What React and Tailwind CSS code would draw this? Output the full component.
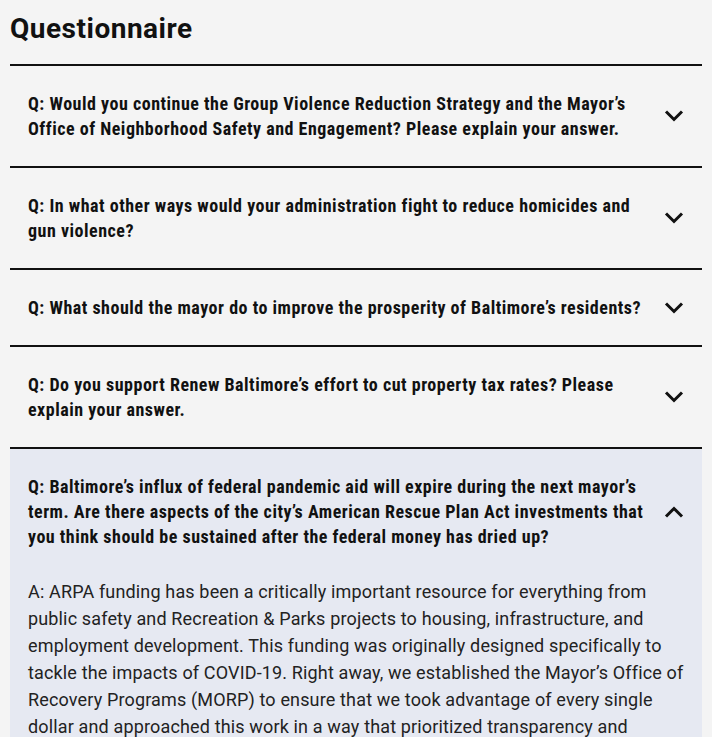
import React, { useState } from "react";

const questions = [
  {
    q: "Q: Would you continue the Group Violence Reduction Strategy and the Mayor’s Office of Neighborhood Safety and Engagement? Please explain your answer.",
  },
  {
    q: "Q: In what other ways would your administration fight to reduce homicides and gun violence?",
  },
  {
    q: "Q: What should the mayor do to improve the prosperity of Baltimore’s residents?",
  },
  {
    q: "Q: Do you support Renew Baltimore’s effort to cut property tax rates? Please explain your answer.",
  },
  {
    q: "Q: Baltimore’s influx of federal pandemic aid will expire during the next mayor’s term. Are there aspects of the city’s American Rescue Plan Act investments that you think should be sustained after the federal money has dried up?",
    a: "A: ARPA funding has been a critically important resource for everything from public safety and Recreation & Parks projects to housing, infrastructure, and employment development. This funding was originally designed specifically to tackle the impacts of COVID-19. Right away, we established the Mayor’s Office of Recovery Programs (MORP) to ensure that we took advantage of every single dollar and approached this work in a way that prioritized transparency and accountability. We will continue to make sure these investments deliver lasting results for residents across every neighborhood in Baltimore.",
  },
];

const Chevron = ({ up }) => (
  <svg width="20" height="12" viewBox="0 0 20 12" className="shrink-0">
    <polyline
      points={up ? "2,10.5 10,2.5 18,10.5" : "2,1.5 10,9.5 18,1.5"}
      fill="none"
      stroke="#111"
      strokeWidth="3"
    />
  </svg>
);

const App = () => {
  const [open, setOpen] = useState(4);

  return (
    <div className="min-h-screen bg-[#f4f4f4] px-[10px] pt-[12px] font-['Roboto',sans-serif] text-[#111]">
      <h2 className="text-[28px] leading-[34px] font-bold mb-[18px] tracking-[0.5px]">
        Questionnaire
      </h2>
      <div>
        {questions.map((item, index) => (
          <div
            key={index}
            className={
              "border-t-2 border-[#111] " +
              (open === index ? "bg-[#e6e9f2]" : "")
            }
          >
            <button
              type="button"
              onClick={() => setOpen(open === index ? -1 : index)}
              className="w-full flex items-center gap-[16px] px-[18px] py-[25px] text-left"
            >
              <span className="flex-1 text-[18px] leading-[25px] font-bold font-stretch-condensed tracking-[0.5px]">
                {item.q}
              </span>
              <Chevron up={open === index} />
            </button>
            {open === index && item.a && (
              <p className="px-[18px] pt-[4px] pb-[25px] text-[18px] leading-[27px] text-[#222] tracking-[0.15px]">
                {item.a}
              </p>
            )}
          </div>
        ))}
      </div>
    </div>
  );
};

export default App;
